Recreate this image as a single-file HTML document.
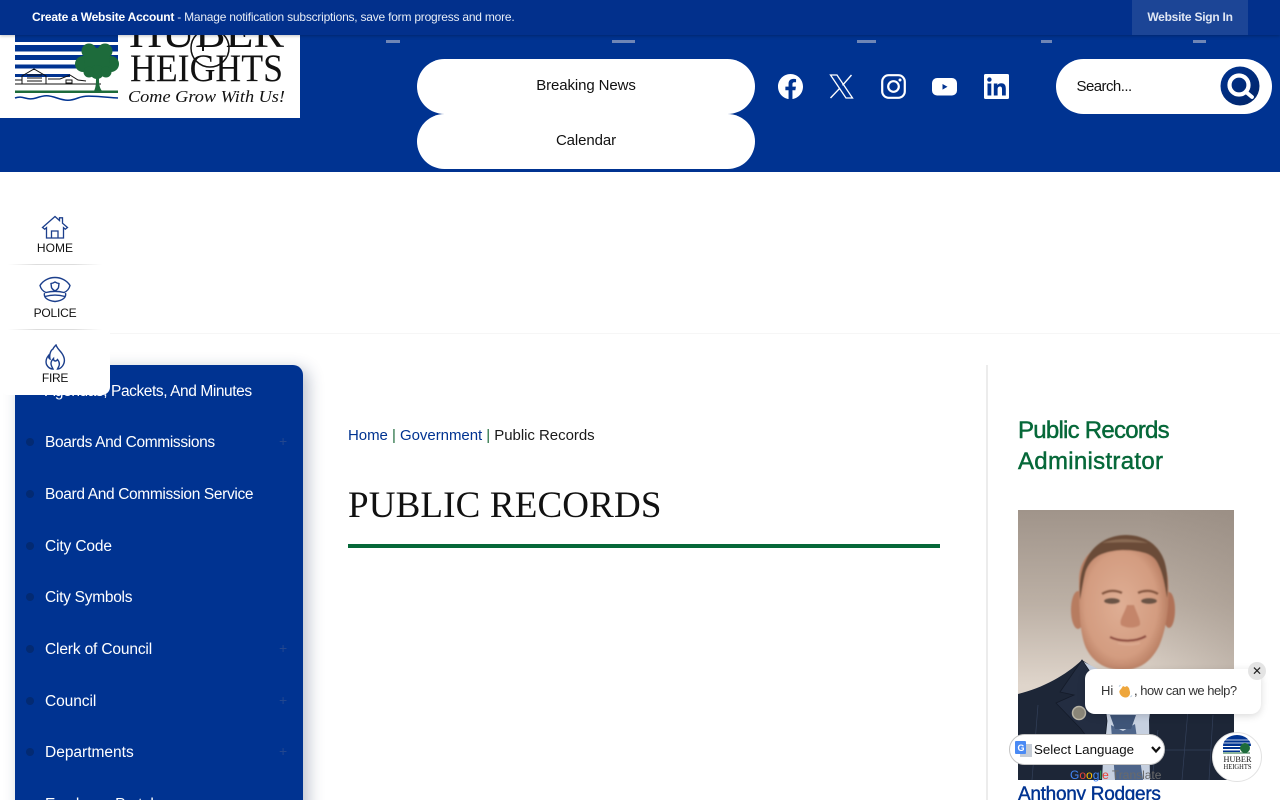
<!DOCTYPE html>
<html lang="en"><head><meta charset="utf-8"><title>Public Records</title>
<style>
*{box-sizing:border-box}
html,body{margin:0;padding:0;width:1280px;height:800px;overflow:hidden;background:#fff;font-family:"Liberation Sans",sans-serif}
.a{position:absolute;white-space:nowrap}
#stage{position:relative;width:1280px;height:800px;overflow:hidden}
.nav{color:#fff;font-size:15.5px;letter-spacing:-.35px;left:45px;line-height:20px}
.dot{position:absolute;left:26px;width:8px;height:8px;border-radius:50%;background:#032a72}
.plus{position:absolute;left:279px;color:#23478f;font-size:14px;line-height:14px}
.ql{font-size:12px;color:#111;width:110px;text-align:center;left:0;letter-spacing:.05px}
.pill{position:absolute;left:417px;width:338px;height:55px;background:#fff;border-radius:28px;text-align:center;line-height:54px;font-size:15px;color:#111;letter-spacing:-.1px}
.dash{position:absolute;top:40px;height:3px;background:#6f86b6}
</style></head><body><div id="stage">

<div class="a" style="left:0;top:0;width:1280px;height:172px;background:#003391"></div>

<!-- logo -->
<div class="a" style="left:0;top:20px;width:300px;height:98px;background:#fff;overflow:hidden">
<svg width="300" height="98" viewBox="0 20 300 98" style="position:absolute;left:0;top:0">
<g fill="#003391">
<path d="M15 35h103v7H15zM15 45h103v6.500H15zM15 55h103v5H15zM15 64.500h65v4H15z"/>
<rect x="15" y="74" width="55" height="3"/>
</g>
<g fill="none" stroke="#111" stroke-width="1">
<path d="M15 80h7M22 84v-8l12-7 12 7v8M27 75h15M27 78h15M27 81h15M15 84h86M48 79h12l10-4 8 5 8 1M66 80h6v3h-6z"/>
</g>
<path d="M15 90.500h103v2.500H15z" fill="#1d6b3b"/>
<path d="M15 98c8-3 12 3 21 0s12-3 21 0 13 3 21 0 13-2 40 0" fill="none" stroke="#003391" stroke-width="1.500"/>
<path d="M94 91c2-4 2-8 2-14h3c0 6 0 10 3 14z" fill="#1d6b3b"/>
<g fill="#1d6b3b"><circle cx="89" cy="51" r="7.500"/><circle cx="105" cy="51" r="7.500"/><circle cx="83" cy="64" r="8"/><circle cx="111" cy="64" r="8"/><circle cx="97" cy="61" r="13"/><circle cx="97" cy="72" r="7"/><circle cx="89" cy="72" r="5.500"/><circle cx="106" cy="72" r="5.500"/></g>
<circle cx="210" cy="48" r="19" fill="none" stroke="#111" stroke-width="1.500"/>
<path d="M203 35v16" stroke="#111" stroke-width="2"/>
<text x="129" y="47" font-family="'Liberation Serif',serif" font-size="43" fill="#111" textLength="155" lengthAdjust="spacingAndGlyphs">HUBER</text>
<text x="130" y="81" font-family="'Liberation Serif',serif" font-size="39" fill="#111" textLength="153" lengthAdjust="spacingAndGlyphs">HEIGHTS</text>
<text x="128" y="102" font-family="'Liberation Serif',serif" font-style="italic" font-size="17" fill="#111" textLength="157" lengthAdjust="spacingAndGlyphs">Come Grow With Us!</text>
</svg></div>

<!-- top bar -->
<div class="a" style="left:0;top:0;width:1280px;height:35px;background:#02308c;box-shadow:0 1px 3px rgba(0,0,0,.25)"></div>
<div class="a" style="left:32px;top:10px;font-size:12px;line-height:15px;color:#fff;letter-spacing:-.22px"><b>Create a Website Account</b> <span style="color:#e6ecf6">- Manage notification subscriptions, save form progress and more.</span></div>
<div class="a" style="left:1132px;top:0;width:116px;height:35px;background:#1c4596;color:#dfe6f3;font-size:12px;font-weight:bold;text-align:center;line-height:35px;letter-spacing:-.25px">Website Sign In</div>

<div class="dash" style="left:386px;width:14px"></div><div class="dash" style="left:612px;width:23px"></div><div class="dash" style="left:857px;width:19px"></div><div class="dash" style="left:1041px;width:11px"></div><div class="dash" style="left:1193px;width:13px"></div>

<div class="pill" style="top:59px">Breaking News</div>
<div class="pill" style="top:114px">Calendar</div>

<!-- social -->
<svg class="a" style="left:778px;top:74px" width="25" height="25" viewBox="0 0 24 24"><path fill="#fff" d="M24 12.070C24 5.400 18.630 0 12 0S0 5.400 0 12.070c0 6.030 4.390 11.020 10.130 11.930v-8.440H7.080v-3.490h3.050V9.410c0-3.020 1.790-4.690 4.530-4.690 1.310 0 2.680.240 2.680.240v2.970h-1.510c-1.490 0-1.960.930-1.960 1.880v2.260h3.330l-.530 3.490h-2.800V24C19.610 23.090 24 18.100 24 12.070z"/></svg>
<svg class="a" style="left:829px;top:74px" width="25" height="25" viewBox="0 0 25 25"><path fill="none" stroke="#fff" stroke-width="1.300" d="M1.500 1h6.500l15.500 23h-6.500z"/><path fill="none" stroke="#fff" stroke-width="1.400" d="M22.500 1l-9 10.300M10.700 14.300L1.500 24"/></svg>
<svg class="a" style="left:881px;top:74px" width="25" height="25" viewBox="0 0 25 25"><rect x="1.200" y="1.200" width="22.600" height="22.600" rx="6.500" fill="none" stroke="#fff" stroke-width="2.200"/><circle cx="12.500" cy="12.500" r="5.300" fill="none" stroke="#fff" stroke-width="2.200"/><circle cx="19" cy="6" r="1.500" fill="#fff"/></svg>
<svg class="a" style="left:932px;top:74px" width="25" height="25" viewBox="0 0 25 25"><rect x="0" y="4" width="25" height="17.500" rx="5" fill="#fff"/><path d="M10.500 10l5 2.800-5 2.800z" fill="#003391"/></svg>
<svg class="a" style="left:984px;top:74px" width="25" height="25" viewBox="0 0 25 25"><rect width="25" height="25" rx="1.500" fill="#fff"/><rect x="3.500" y="9.500" width="3.800" height="12" fill="#003391"/><circle cx="5.400" cy="5.600" r="2.200" fill="#003391"/><path fill="#003391" d="M9.800 9.500h3.600v1.700c.7-1.200 2.100-2 3.900-2 3.400 0 4.500 2.100 4.500 5.400v6.900h-3.800v-6.100c0-1.700-.4-2.900-2-2.900-1.700 0-2.400 1.200-2.400 2.900v6.100H9.800z"/></svg>

<!-- search -->
<div class="a" style="left:1056px;top:59px;width:216px;height:55px;background:#fff;border-radius:28px"></div>
<div class="a" style="left:1076.500px;top:77px;font-size:15px;line-height:19px;color:#111;letter-spacing:-.55px">Search...</div>
<svg class="a" style="left:1220px;top:66px" width="40" height="40" viewBox="0 0 40 40"><defs><linearGradient id="sg" x1="0" y1="0" x2="1" y2="1"><stop offset="0" stop-color="#003391"/><stop offset="1" stop-color="#012466"/></linearGradient></defs><circle cx="20" cy="20" r="19.500" fill="url(#sg)"/><circle cx="19" cy="19" r="9.500" fill="none" stroke="#fff" stroke-width="4.200"/><path d="M26 26l6 5" stroke="#fff" stroke-width="3.800" stroke-linecap="round"/></svg>

<div class="a" style="left:0;top:333px;width:1280px;height:1px;background:#f6f6f6"></div>

<!-- sidebar -->
<div class="a" style="left:15px;top:365px;width:288px;height:460px;background:#003391;border-radius:0 10px 0 0;box-shadow:5px 4px 16px rgba(30,50,90,.3)"></div>
<div class="a nav" style="top:382px;letter-spacing:-.42px">Agendas, Packets, And Minutes</div>
<div class="a nav" style="top:433px">Boards And Commissions</div>
<div class="a nav" style="top:485px">Board And Commission Service</div>
<div class="a nav" style="top:537px;letter-spacing:-.13px">City Code</div>
<div class="a nav" style="top:588px;letter-spacing:-.27px">City Symbols</div>
<div class="a nav" style="top:640px;letter-spacing:-.15px">Clerk of Council</div>
<div class="a nav" style="top:692px;letter-spacing:-.07px">Council</div>
<div class="a nav" style="top:743px;letter-spacing:0">Departments</div>
<div class="a nav" style="top:795px">Employee Portal</div>
<i class="dot" style="top:438px"></i><i class="dot" style="top:490px"></i><i class="dot" style="top:542px"></i><i class="dot" style="top:593px"></i><i class="dot" style="top:645px"></i><i class="dot" style="top:697px"></i><i class="dot" style="top:748px"></i><i class="dot" style="top:800px"></i>
<span class="plus" style="top:434px">+</span><span class="plus" style="top:641px">+</span><span class="plus" style="top:693px">+</span><span class="plus" style="top:744px">+</span>

<!-- quick links -->
<div class="a" style="left:0;top:200px;width:110px;height:195px;background:#fff;border-radius:0 0 8px 8px"></div>
<div class="a" style="left:8px;top:264px;width:94px;height:1px;background:linear-gradient(90deg,#fff,#ddd 30%,#ddd 70%,#fff)"></div>
<div class="a" style="left:8px;top:329px;width:94px;height:1px;background:linear-gradient(90deg,#fff,#ddd 30%,#ddd 70%,#fff)"></div>
<svg class="a" style="left:41px;top:215px" width="28" height="24" viewBox="0 0 28 24" fill="none" stroke="#1c3f8c" stroke-width="1.300"><path d="M1.500 12.500L14 1.500l4.500 4V2.800h3v5.400l5 4.300-2.200 1.700-1.800-1.500V23H5.500V12.700l-1.800 1.500zM10.500 23v-7h6.500v7"/></svg>
<div class="a ql" style="top:241px;line-height:15px">HOME</div>
<svg class="a" style="left:38px;top:276px" width="34" height="27" viewBox="0 0 34 27" fill="none" stroke="#1c3f8c" stroke-width="1.400"><path d="M2 9.500C5 4.500 11 1.500 17 1.500s12 3 15 8c-1 4-3.500 6-6 7-6-1.500-12-1.500-18 0-2.500-1-5-3-6-7z"/><path d="M6.500 17c-1 4 2 7.500 10.500 8.500 8.500-1 11.500-4.500 10.500-8.500M7 20.500c7-2 13-2 20 0"/><path d="M17 6l2 1 2 .5-.5 4c-.5 1.500-2 2.500-3.500 3.500-1.500-1-3-2-3.500-3.500l-.5-4 2-.5z"/></svg>
<div class="a ql" style="top:306px;line-height:15px;letter-spacing:-.2px">POLICE</div>
<svg class="a" style="left:44px;top:344px" width="22" height="26" viewBox="0 0 22 26" fill="none" stroke="#1c3f8c" stroke-width="1.400"><path d="M12 1c1.500 4 4 5.500 6 8.500 3 4.500 3 9 .5 12.500-1.500 2-3 3-5 3l1-2c1.500-2.500 1-5-1-7.500-1 1.500-2 2-3.500 1-.5-.8-.5-1.500-.5-2-1.500 1.500-2.500 3-2.500 5 0 2 1 3.500 2 5.500-3 0-5-1.500-6.500-4.500-1-3 0-6.500 2-9 0 2 .5 3 1.500 3.500C5 10 7 6 9 5c.5-1.500 1.500-2.500 3-4z"/></svg>
<div class="a ql" style="top:371px;line-height:15px;letter-spacing:-.3px">FIRE</div>

<!-- main -->
<div class="a" style="left:348px;top:426px;font-size:15px;line-height:19px;letter-spacing:-.04px;color:#1a1a1a"><span style="color:#003391">Home</span> <span style="color:#1d6b3b">|</span> <span style="color:#003391">Government</span> <span style="color:#1d6b3b">|</span> Public Records</div>
<div class="a" style="left:348px;top:484px;font-family:'Liberation Serif',serif;font-size:37px;line-height:44px;color:#111;letter-spacing:.15px">PUBLIC RECORDS</div>
<div class="a" style="left:348px;top:544px;width:592px;height:4px;background:#066839"></div>

<!-- right -->
<div class="a" style="left:986px;top:365px;width:2px;height:435px;background:#ececec"></div>
<div class="a" style="left:1018px;top:415px;font-size:24px;line-height:31px;color:#066839;-webkit-text-stroke:.45px #066839"><span style="letter-spacing:-.75px">Public Records</span><br><span style="letter-spacing:.3px">Administrator</span></div>

<!-- portrait -->
<svg class="a" style="left:1018px;top:510px" width="216" height="270" viewBox="0 0 216 270">
<defs>
<linearGradient id="bg" x1="0" y1="0" x2="0" y2="1"><stop offset="0" stop-color="#a0948a"/><stop offset=".35" stop-color="#bcb0a5"/><stop offset=".65" stop-color="#dfd5cb"/><stop offset="1" stop-color="#e2dad0"/></linearGradient>
<linearGradient id="sh" x1="0" y1="0" x2="1" y2="0"><stop offset=".6" stop-color="#8f8379" stop-opacity="0"/><stop offset="1" stop-color="#8f8379" stop-opacity=".3"/></linearGradient>
<radialGradient id="face" cx=".47" cy=".5" r=".62"><stop offset="0" stop-color="#dfae94"/><stop offset=".65" stop-color="#d39c80"/><stop offset="1" stop-color="#a86b50"/></radialGradient>
<filter id="b2"><feGaussianBlur stdDeviation=".9"/></filter>
</defs>
<rect width="216" height="270" fill="url(#bg)"/>
<rect width="216" height="170" fill="url(#sh)"/>
<!-- suit -->
<path d="M0 184C25 178 48 165 64 150l28 18 40-4 18 10c20 6 45 14 66 22v74H0z" fill="#1d2637"/>
<!-- shirt -->
<path d="M62 150l25 60 -3 60h48l-1-60 6-46-35 6z" fill="#c6d0e0"/>
<path d="M93 215l12 6 12-7 8 56H97z" fill="#4e658a"/>
<path d="M92 205h26l-5 14h-16z" fill="#3f5578"/>
<!-- lapel -->
<path d="M64 150L42 182l14 3-18 8 25 26 22 30 4-38-4-30z" fill="#232d41" stroke="#141b29" stroke-width=".8"/>
<path d="M140 220l-6 50M170 200l-6 70M195 205l-4 65M0 240h216M20 195l-6 75" stroke="#33405a" stroke-width=".7"/>
<circle cx="61" cy="203" r="6.500" fill="#8a8678" stroke="#b8b4a6" stroke-width="1.500"/>
<g filter="url(#b2)">
<ellipse cx="60" cy="100" rx="7" ry="19" fill="#b77b60"/>
<ellipse cx="151" cy="100" rx="6" ry="18" fill="#b07258"/>
<path d="M61 70C61 42 85 30 108 30c22 0 40 14 42 40 2 26-2 50-9 66-8 16-20 24-36 24-18 0-30-8-37-22-7-16-7-44-7-68z" fill="url(#face)"/>
<path d="M62 90c-1-16 0-28 6-40 8-17 24-25 40-25 18 0 32 9 38 25 4 11 4 28 3 38-2-12-4-24-8-32-3-8-8-11-14-13-14-4-30-4-43 1-10 4-15 12-17 20-2 8-3 16-5 26z" fill="#6b4c38"/>
<path d="M84 33c12-5 32-5 46 0-14-1-32-1-46 0z" fill="#8a6a52"/>
<path d="M84 84c6-4 14-4 20-1M120 83c6-3 14-3 20 1" stroke="#85563f" stroke-width="2.500" fill="none"/>
<ellipse cx="94" cy="91" rx="8" ry="3" fill="#6a5244"/><ellipse cx="131" cy="91" rx="8" ry="3" fill="#6a5244"/>
<path d="M109 95c-3 9-8 15-6 20 4 3 14 4 19 0 1-5-3-11-6-20z" fill="#c4856a"/>
<path d="M92 127c10 5 26 5 36-1" stroke="#8e4c3f" stroke-width="2.200" fill="none"/>
<path d="M100 133c6 2 16 2 22 0" stroke="#dba98f" stroke-width="2" fill="none"/>
</g>
</svg>

<div class="a" style="left:1018px;top:783px;font-size:19px;line-height:24px;color:#003391;letter-spacing:-.28px;-webkit-text-stroke:.4px #003391">Anthony Rodgers</div>

<!-- translate -->
<div class="a" style="left:1070px;top:769px;font-size:12px;line-height:13px"><span style="color:#4285f4">G</span><span style="color:#ea4335">o</span><span style="color:#fbbc05">o</span><span style="color:#4285f4">g</span><span style="color:#34a853">l</span><span style="color:#ea4335">e</span> <span style="color:#6a6a6a">Translate</span></div>
<div class="a" style="left:1009px;top:734px;width:156px;height:31px;background:#fff;border:1px solid #c4c4c4;border-radius:16px;font-size:13.333px;line-height:29px;color:#111;padding-left:24px">Select Language</div>
<svg class="a" style="left:1015px;top:741px" width="18" height="17" viewBox="0 0 18 17"><rect x="5" y="3" width="12" height="13" fill="#c5ccd6"/><rect x="0" y="0" width="11" height="13" rx="1" fill="#4a8af4"/><text x="2.500" y="10" font-size="9" font-weight="bold" fill="#fff" font-family="Liberation Sans,sans-serif">G</text></svg>
<svg class="a" style="left:1150px;top:745px" width="12" height="9" viewBox="0 0 12 9"><path d="M2 2l4 4.500L10 2" fill="none" stroke="#111" stroke-width="2.200"/></svg>

<!-- chat -->
<div class="a" style="left:1085px;top:669px;width:176px;height:45px;background:#fff;border-radius:10px;box-shadow:0 2px 8px rgba(0,0,0,.15)"></div>
<div class="a" style="left:1101px;top:682px;font-size:13px;line-height:18px;color:#333">Hi</div>
<svg class="a" style="left:1118px;top:684px" width="15" height="15" viewBox="0 0 15 15"><path d="M3 5l2-3 2 1 2-1 2 2 1 4c.5 3-2 6-5 5.500C4 13 2 11 1.500 8.500 1 7 2 6 3 5z" fill="#eea63c"/><path d="M1 2.500L2.500 1M12.500 13l1.500-1.500" stroke="#b9cde0" stroke-width="1"/></svg>
<div class="a" style="left:1134px;top:682px;font-size:13px;line-height:18px;color:#333;letter-spacing:-.48px">, how can we help?</div>
<div class="a" style="left:1248px;top:662px;width:18px;height:18px;border-radius:50%;background:#e4e4e4;color:#222;font-size:12px;line-height:18px;text-align:center">✕</div>
<svg class="a" style="left:1212px;top:732px" width="50" height="50" viewBox="0 0 50 50"><circle cx="25" cy="25" r="24.500" fill="#fff" stroke="#e2e2e2"/><path d="M11 14a14 11 0 0 1 28 0z" fill="#003391"/><path d="M11 8h28M11 11h28" stroke="#fff" stroke-width=".8"/><path d="M11 15h18v2H11zM11 18.500h17v1.500H11z" fill="#003391"/><path d="M11 21h27" stroke="#1d6b3b" stroke-width="1"/><circle cx="33" cy="16" r="5" fill="#1d6b3b"/><text x="25.500" y="30" text-anchor="middle" font-family="'Liberation Serif',serif" font-size="8" fill="#111" textLength="28" lengthAdjust="spacingAndGlyphs">HUBER</text><text x="25.500" y="37" text-anchor="middle" font-family="'Liberation Serif',serif" font-size="7.500" fill="#111" textLength="28" lengthAdjust="spacingAndGlyphs">HEIGHTS</text></svg>
</div></body></html>
